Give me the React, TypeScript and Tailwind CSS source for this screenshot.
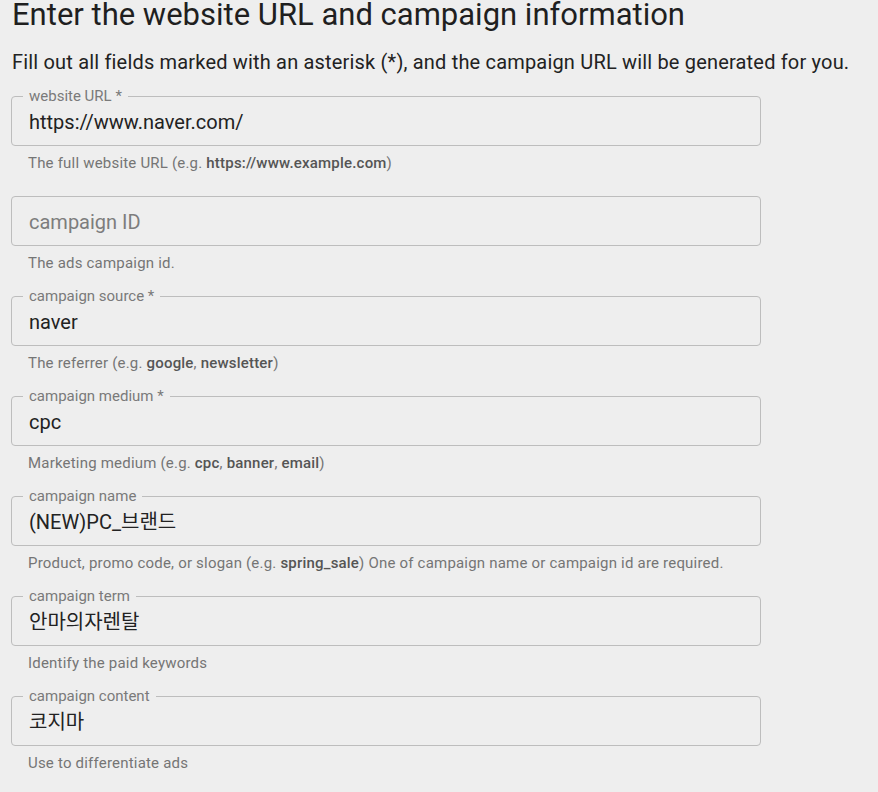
type Field = {
  label: string;
  value?: string;
  required?: boolean;
  helper: React.ReactNode;
};

const fields: Field[] = [
  {
    label: "website URL",
    required: true,
    value: "https://www.naver.com/",
    helper: (
      <>
        The full website URL (e.g. <b>https://www.example.com</b>)
      </>
    ),
  },
  {
    label: "campaign ID",
    helper: <>The ads campaign id.</>,
  },
  {
    label: "campaign source",
    required: true,
    value: "naver",
    helper: (
      <>
        The referrer (e.g. <b>google</b>, <b>newsletter</b>)
      </>
    ),
  },
  {
    label: "campaign medium",
    required: true,
    value: "cpc",
    helper: (
      <>
        Marketing medium (e.g. <b>cpc</b>, <b>banner</b>, <b>email</b>)
      </>
    ),
  },
  {
    label: "campaign name",
    value: "(NEW)PC_브랜드",
    helper: (
      <>
        Product, promo code, or slogan (e.g. <b>spring_sale</b>) One of campaign
        name or campaign id are required.
      </>
    ),
  },
  {
    label: "campaign term",
    value: "안마의자렌탈",
    helper: <>Identify the paid keywords</>,
  },
  {
    label: "campaign content",
    value: "코지마",
    helper: <>Use to differentiate ads</>,
  },
];

function OutlinedField({ label, value, required, helper }: Field) {
  const filled = Boolean(value);
  return (
    <div className="h-[100px]">
      <div className="relative h-[50px] w-[750px] rounded-[4px] border border-[#bdbdbd]">
        {filled ? (
          <span className="absolute -top-[9px] left-[11px] bg-[#eeeeee] px-[6px] text-[15px] leading-[16px] text-[#7a7a7a]">
            {label}
            {required ? " *" : ""}
          </span>
        ) : null}
        <div
          className={
            filled
              ? "flex h-full items-center pl-[17px] pt-[1px] text-[20px] text-[#222222]"
              : "flex h-full items-center pl-[17px] pt-[1px] text-[20px] text-[#7d7d7d]"
          }
        >
          {filled ? value : label}
        </div>
      </div>
      <p className="mt-[7px] pl-[17px] text-[15px] leading-[20px] tracking-[0.2px] text-[#757575] [&_b]:font-medium [&_b]:text-[#555555]">
        {helper}
      </p>
    </div>
  );
}

export default function App() {
  return (
    <div
      className="min-h-screen bg-[#eeeeee] pl-[11px] text-[#212121]"
      style={{ fontFamily: 'Roboto, "Noto Sans CJK KR", sans-serif' }}
    >
      <h1 className="pl-[1px] text-[31px] leading-[30px] text-[#1f1f1f]">
        Enter the website URL and campaign information
      </h1>
      <p className="mt-[21px] pl-[1px] text-[20px] leading-[22px] tracking-[0.18px] text-[#222222]">
        Fill out all fields marked with an asterisk (*), and the campaign URL
        will be generated for you.
      </p>
      <div className="mt-[23px]">
        {fields.map((field) => (
          <OutlinedField key={field.label} {...field} />
        ))}
      </div>
    </div>
  );
}
